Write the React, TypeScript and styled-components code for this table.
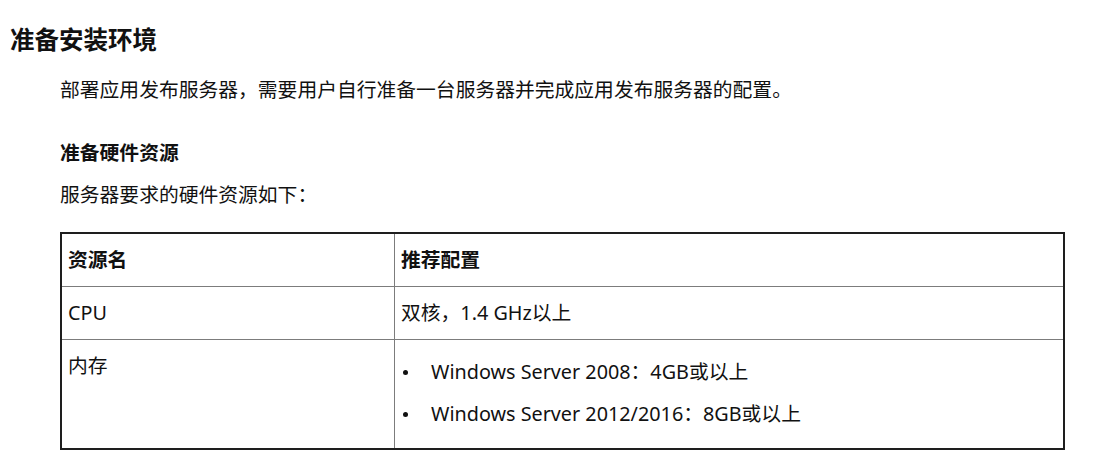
import React from 'react';
import styled, { createGlobalStyle } from 'styled-components';

const GlobalStyle = createGlobalStyle`
  body {
    margin: 0;
    background: #fff;
    color: #111;
    font-family: 'Noto Sans', 'Noto Sans CJK SC', sans-serif;
  }
`;

const Page = styled.div`
  display: flex;
  flex-direction: column;
  padding: 22px 36px 0 10px;
`;

const Title = styled.h1`
  margin: 0;
  font-size: 24.5px;
  line-height: 36px;
  font-weight: 700;
`;

const Section = styled.div`
  display: flex;
  flex-direction: column;
  padding-left: 50px;
`;

const Text = styled.p<{ $top: number }>`
  margin: ${(p) => p.$top}px 0 0;
  font-size: 19.8px;
  line-height: 30px;
`;

const SubTitle = styled.h2`
  margin: 33px 0 0;
  font-size: 19.8px;
  line-height: 30px;
  font-weight: 700;
`;

const Table = styled.table`
  margin-top: 22px;
  width: 1005px;
  border-collapse: collapse;
  border: 2px solid #1e1e1e;
  font-size: 19.8px;
  line-height: 30px;
`;

const Cell = styled.td<{ $head?: boolean; $w?: number }>`
  border: 1px solid #7c7c7c;
  padding: 11px 6px;
  vertical-align: top;
  text-align: left;
  font-weight: ${(p) => (p.$head ? 700 : 400)};
  width: ${(p) => (p.$w ? `${p.$w}px` : 'auto')};
`;

const List = styled.ul`
  margin: 6px 0 8px;
  padding: 0;
  list-style: none;
`;

const Item = styled.li`
  display: flex;
  align-items: center;
  & + & {
    margin-top: 12px;
  }
`;

const Bullet = styled.span`
  flex: none;
  width: 30px;
  display: flex;
  align-items: center;
  &::before {
    content: '';
    width: 5px;
    height: 5px;
    margin-left: 2px;
    border-radius: 50%;
    background: #111;
  }
`;

const rows = [
  { name: 'CPU', value: '双核，1.4 GHz以上' },
];

const memory = ['Windows Server 2008：4GB或以上', 'Windows Server 2012/2016：8GB或以上'];

export default function App() {
  return (
    <>
      <GlobalStyle />
      <Page>
        <Title>准备安装环境</Title>
        <Section>
          <Text $top={17}>部署应用发布服务器，需要用户自行准备一台服务器并完成应用发布服务器的配置。</Text>
          <SubTitle>准备硬件资源</SubTitle>
          <Text $top={12}>服务器要求的硬件资源如下：</Text>
          <Table>
            <tbody>
              <tr>
                <Cell as="th" $head $w={320}>资源名</Cell>
                <Cell as="th" $head>推荐配置</Cell>
              </tr>
              {rows.map((r) => (
                <tr key={r.name}>
                  <Cell>{r.name}</Cell>
                  <Cell>{r.value}</Cell>
                </tr>
              ))}
              <tr>
                <Cell>内存</Cell>
                <Cell>
                  <List>
                    {memory.map((m) => (
                      <Item key={m}>
                        <Bullet />
                        {m}
                      </Item>
                    ))}
                  </List>
                </Cell>
              </tr>
            </tbody>
          </Table>
        </Section>
      </Page>
    </>
  );
}
